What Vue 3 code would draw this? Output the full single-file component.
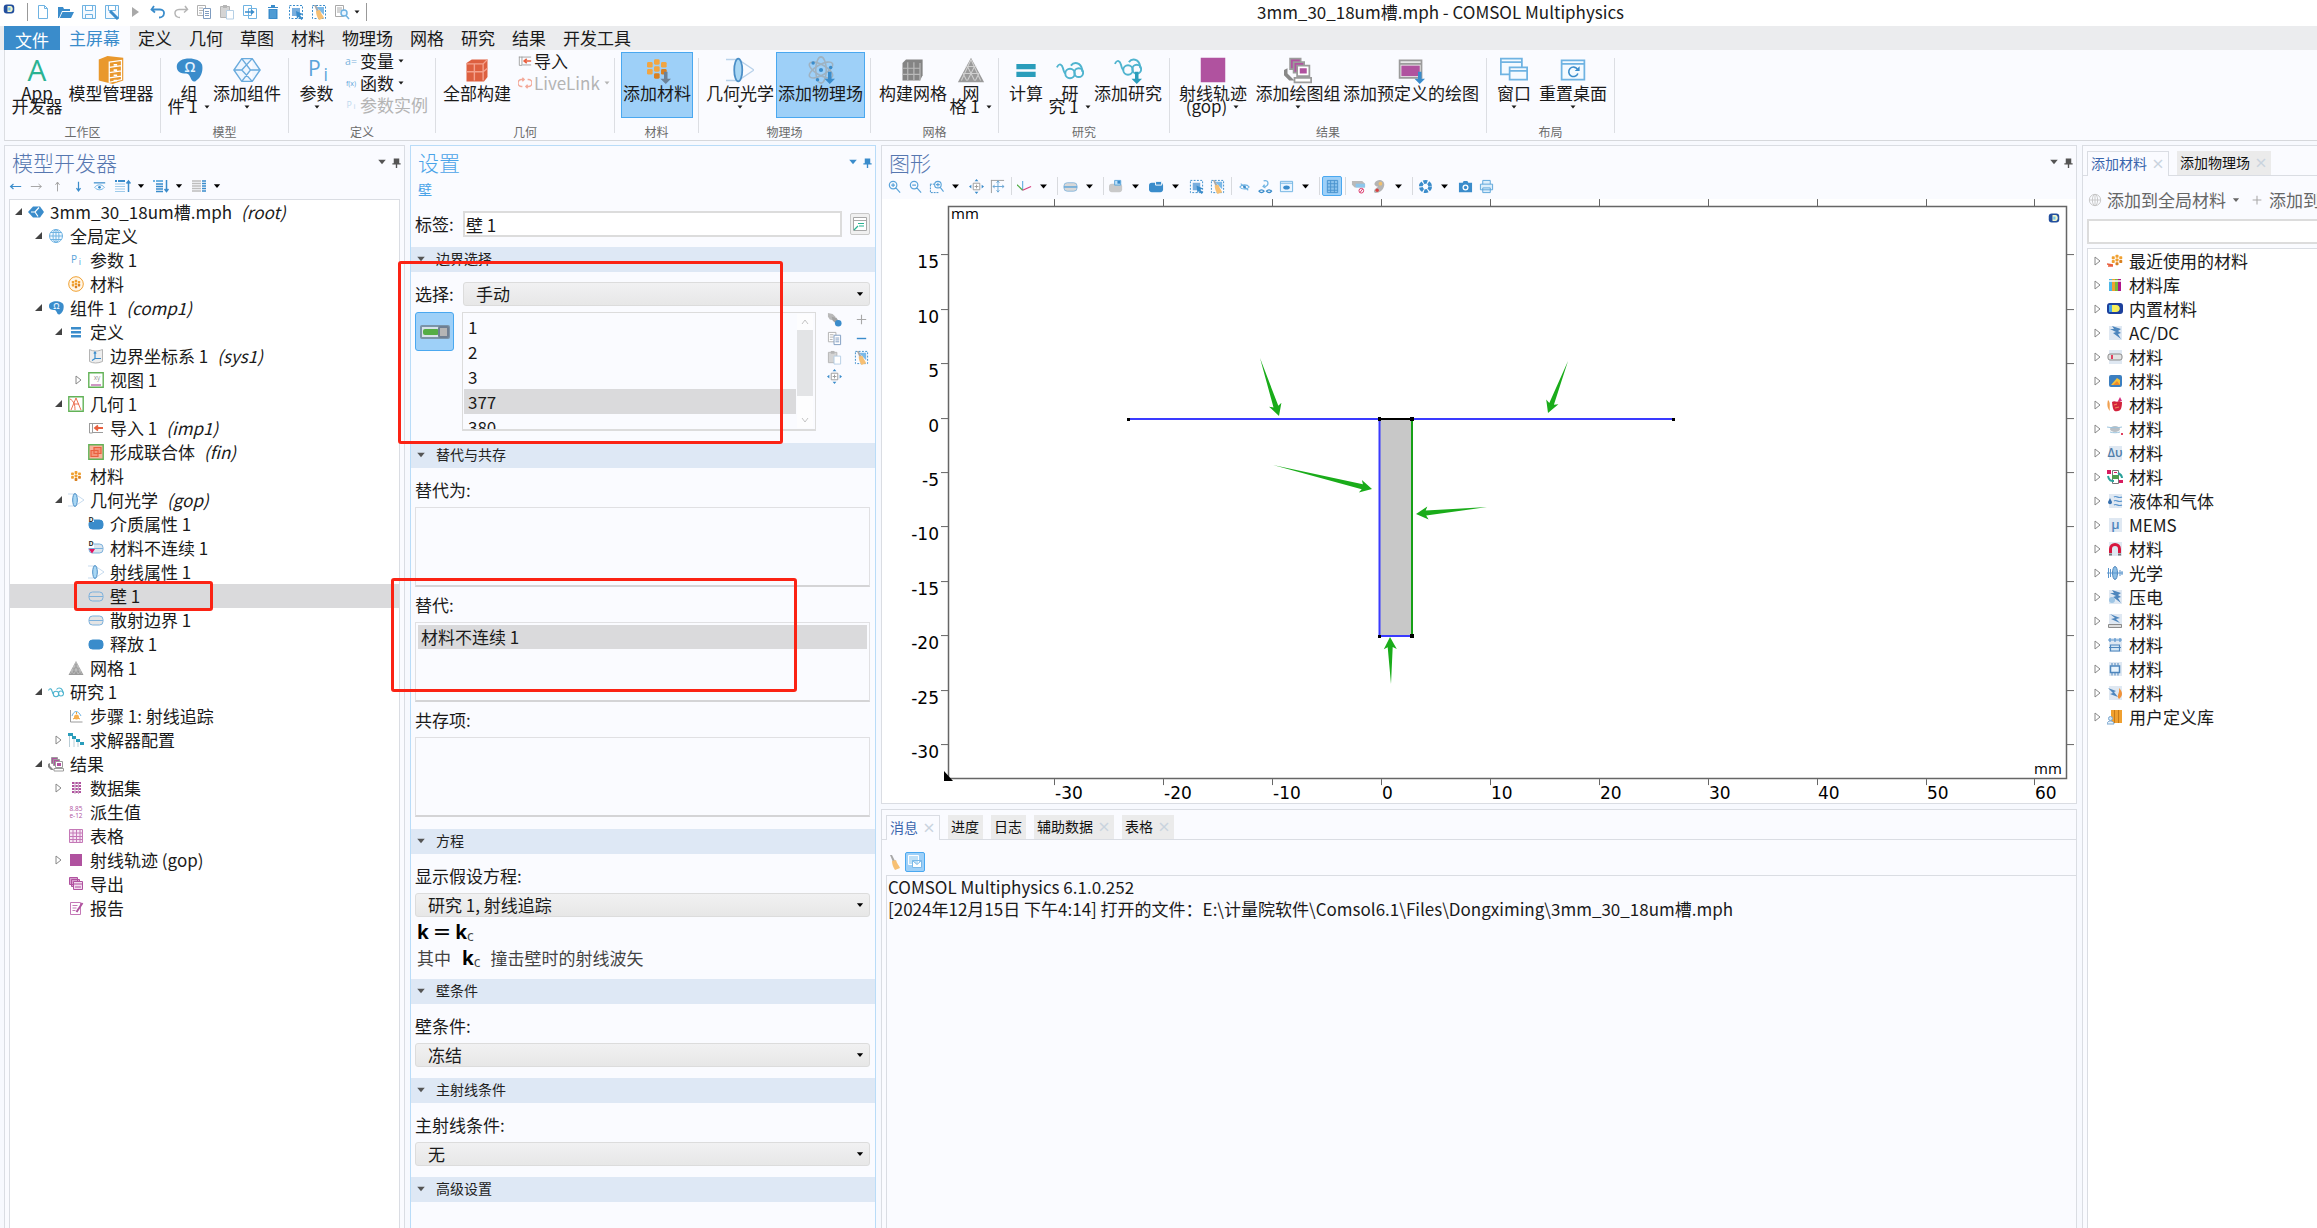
<script setup>
import { h, ref } from 'vue'

const B = '#3a8ccb'
const L = '#6fb3e2'
const G = '#9b9b9b'
const O = '#f0a030'
const R = '#e9603f'
const T = '#2a9dbb'
const P = '#b0529f'
const svgText = (x, y, s, c, t, extra = '') =>
  `<text x="${x}" y="${y}" font-size="${s}" fill="${c}" text-anchor="middle" font-family="Open Sans, sans-serif" ${extra}>${t}</text>`
const stroke = (d, c, w = 1, f = 'none') => `<path d="${d}" stroke="${c}" stroke-width="${w}" fill="${f}"/>`
const fill = (d, c) => `<path d="${d}" fill="${c}"/>`
const dots = (c, c2 = '#d98020') =>
  `<g fill="${c}"><rect x="6" y="1" width="4" height="4" rx="1"/><rect x="1" y="3" width="4" height="4" rx="1"/><rect x="11" y="3" width="4" height="4" rx="1"/><rect x="6" y="6" width="4" height="4" rx="1"/><rect x="1" y="8" width="4" height="4" rx="1"/></g><g fill="${c2}"><rect x="11" y="8" width="4" height="4" rx="1"/><rect x="6" y="11" width="4" height="4" rx="1"/></g>`
const glasses = `<g fill="none" stroke="#4fb4cf" stroke-width="1.1"><circle cx="8" cy="10" r="2.7"/><circle cx="13" cy="9.5" r="2.5"/><path d="M.5 6.5C2 3.500 3.500 5 4 7c.5 2 1 3 1.500 3M8.500 5.500C10 3.500 12 4 13 4.500c1.500 1 2 3 2 4.500"/></g>`
const meshLines = stroke('M5 6h6M3.500 10h9M8 2l5.500 12M8 2L2.500 14M6 6l4 8M10 6L6 14M3.500 10l2 4M12.500 10l-2 4', '#cfcfcf', .6)
const stack = (c) =>
  `<g stroke="${G}" fill="#fff"><path d="M3.500 1.500h6v6h-6z" fill="${c}"/><path d="M5.500 3.500h6v6h-6z" fill="${c}"/><path d="M7.500 5.500h7v6h-7z"/></g>` +
  fill('M9 7h4v3H9z', c) + fill('M0 8l2-1v3l4 4H3L0 11z', '#888') + stroke('M6 12.500h9.500v2.500h-9.500z', G, 1, '#fff')
const pill = (c, f) => `<rect x="1" y="4" width="14" height="9" rx="3.500" fill="${f}" stroke="${c}"/>`
const soft = '<rect x="2" y="1" width="13" height="14" fill="#dfe8f2"/>'
const broom = fill('M3 1l2 0 3 6-2 1z', '#a8a8a8') + fill('M5 7l4-1c1 4 3 5 4 8l-5 2C6 13 5 10 5 7z', '#f7c074')
const dashBox = stroke('M1.500 1.500h13v13h-13z', B, 1).replace('/>', ' stroke-dasharray="2 1.500"/>')
const downArrow = (c) => fill('M12 9h2v4h2l-3 3-3-3h2z', c)
const bolt = fill('M5 1l9 3-3 2 3 2-3 1 3 5-8-6 3-1-6-3 4 0z', '#4e86bd')

const icons = {
  logo: '<rect x="1" y="2" width="14" height="12" rx="4" fill="#234f9e"/><path d="M6 4h4c4 0 4 8 0 8H6z" fill="#f3f6c9"/><path d="M7 6h3v4H7z" fill="#6fc4ef"/>',
  newf: stroke('M3.500 1.500h6l3 3v10h-9zM9.500 1.500v3h3', L, 1, '#fff'),
  open: fill('M0 3h5l1 2h6v2H4l-3 7H0zM4.500 8H16l-3 6H1.800z', B),
  save: stroke('M1.500 1.500h13v13h-13z M4.500 1.500v5h7v-5 M4.500 14.500v-4h7v4', L, 1, '#f4f9ff'),
  saveas: stroke('M1.500 1.500h13v13h-13z M4.500 1.500v5h7v-5', L, 1, '#f4f9ff') + stroke('M6 7l8 8', B, 3),
  play: fill('M5 3l7 5-7 5z', '#a9a9a9'),
  undo: stroke('M4 2L1.500 5.500 5 8.500M1.500 5.500H10c6 0 5 8-1 8', B, 1.800),
  redo: stroke('M12 2l2.500 3.500L11 8.500M14.500 5.500H6c-6 0-5 8 1 8', '#b5b5b5', 1.500),
  copy: stroke('M1.500 1.500h8v10h-8zM3 4h4M3 6.500h4M3 9h3', '#b0b0b0', 1, '#fff') + stroke('M7.500 4.500h7v10h-7zM9 7.500h4M9 9.500h4M9 11.500h4', '#7f9cc0', 1, '#fff'),
  paste: stroke('M1.500 2.500h9v11h-9z', '#b5b5b5', 1, '#d4d4d4') + fill('M4 1h4v3H4z', '#b5b5b5') + stroke('M7.500 6.500h7v8.500h-7z', '#b5cfe5', 1, '#fff'),
  dup: stroke('M1.500 1.500h8v10h-8zM6.500 4.500h8v10h-8z', L, 1, '#fff') + stroke('M3 8h8M9 6l2.500 2L9 10', B, 1.500),
  trash: fill('M3 3h10v1H3zM6 1h4v2H6zM3.500 5h9v10h-9z', B) + stroke('M6 6v8M8 6v8M10 6v8', L, .8),
  selbox: dashBox + fill('M4 4h8v8H4z', '#79aede') + fill('M8 7l7 3-3 1.500 3 3-1.500 1.500-3-3L9 15z', B),
  clean: dashBox + fill('M5 3h8v8z', '#7bb9e8') + broom,
  broom,
  find: stroke('M1.500 1.500h8v11h-8zM3 4h5M3 6h5M3 8h3', '#a9a9a9', 1, '#fff') + stroke('M13 9a3 3 0 1 1-6 0a3 3 0 1 1 6 0M12 11.500l3 3.500', L, 1.500, '#eaf5ff'),
  drop: fill('M3 5h10l-5 6z', 'currentColor'),
  pin: fill('M4 2h8v8H4zM2 9h12v2H2zM7 11h2v5H7z', 'currentColor'),
  bigA: svgText(8, 14, 17, '#2bb393', 'A'),
  cabinet: fill('M1 2l5-2 9 1v13l-6 2-8-2z', '#e9982c') + stroke('M7 3.500l7-1v11l-7 1.500z M7 6.500l7-1M7 9.500l7-1M7 12.500l7-1', '#fff', .7) + stroke('M9.500 5h2M9.500 8h2M9.500 11h2M9.500 14h2', '#fff', 1),
  comp: fill('M1 6C1 0 14 0 15.500 5c.8 4-1 8-4 9.500-3 .5-2-4-5-4.500C3 10 1 9 1 6z', B) + svgText(8.500, 9, 8, '#e5f3ff', 'Ω', 'font-weight="600"'),
  addcomp: stroke('M5 1.500h6L15.500 8 11 14.500H5L.5 8zM5 1.500l5 6.500-5 6.500M11 1.500L5 8l6 6.500M.5 8H5M10 8h5.500', '#6aabdd', .8, '#eef6ff'),
  pi: svgText(6.500, 11.500, 12, '#5ba4da', 'P') + svgText(13, 14, 10, '#5ba4da', 'i'),
  pis: svgText(6, 11, 10, '#5ba4da', 'P') + svgText(12, 13, 9, '#5ba4da', 'i'),
  aeq: svgText(8, 12, 12, '#7cb3dd', 'a='),
  fx: svgText(8, 11, 8, '#5ba4da', 'f(x)'),
  pig: svgText(6, 11, 10, '#bdd8ee', 'P') + svgText(12, 13, 9, '#bdd8ee', 'i'),
  buildall: fill('M2 4l3-2h9v10l-2 2.500H2z', '#dd6040') + stroke('M2 4.500h9.500V14M11.500 4.500L14 2M2 9h9.500l2.500-2M6.500 4.500V14', '#f4a18c', .8),
  imp: stroke('M1 3.500h14M1.500 3v10h3V3M5 12.500h10', G, 1, '#fff') + stroke('M15 8H7M10 5.500L7 8l3 2.500', R, 1.800),
  livelink: stroke('M7 4H4a3 3 0 0 0 0 8h1M9 12h3a3 3 0 0 0 0-8h-1M5 2l2 2-2 2M11 10l-2 2 2 2', '#f3a999', 1.600),
  addmat: '<g transform="translate(1.500 1) scale(.8)">' + dots('#f2a541') + '</g>' + downArrow('#6d8296'),
  lens: stroke('M0 2h7L16 8 7 14H0', '#b9d2ea', .8) + '<ellipse cx="7" cy="8" rx="2.300" ry="6.500" fill="#a9d7f4" stroke="#4c8fc7"/>',
  atom: '<g fill="none" stroke="#9fb2c1" stroke-width=".9"><ellipse cx="8" cy="8" rx="3" ry="7.500"/><ellipse cx="8" cy="8" rx="3" ry="7.500" transform="rotate(60 8 8)"/><ellipse cx="8" cy="8" rx="3" ry="7.500" transform="rotate(120 8 8)"/></g><g fill="#3a8ccb"><circle cx="8" cy="8" r="1.200"/><circle cx="3.500" cy="4" r="1"/><circle cx="13.500" cy="6.500" r="1"/><circle cx="6" cy="13.500" r="1"/></g>' + downArrow(B),
  meshbuild: fill('M2 4l2-2h9.500v9L12 14H2z', '#848484') + stroke('M5 3.500V14M8.500 3.500V14M2 7h10M2 10.500h10M12 4v10', '#b9b9b9', .7),
  mesh: fill('M8 1l7.500 14H.5z', '#9a9a9a') + meshLines,
  equal: fill('M2.500 4.500h11v3h-11zM2.500 9h11v3h-11z', T),
  study: glasses,
  addstudy: `<g transform="translate(0 -2)">${glasses}</g>` + downArrow(T),
  sq: `<rect x="1" y="1" width="14" height="14" fill="${P}"/>`,
  sqs: `<rect x="2" y="2" width="12" height="12" fill="${P}"/>`,
  plots: stack(P),
  addplot: stroke('M1.500 2.500h12.500v10h-12.500zM1.500 4.500h12.500', G, 1, '#e8e8e8') + fill('M2.500 5.500h10.500v6H2.500z', P) + downArrow(B),
  windows: stroke('M.5 1.500h12v9H.5zM.5 3.500h12', L, 1, '#f4faff') + stroke('M5.500 6.500h10v7h-10zM5.500 8.500h10', L, 1, '#f4faff'),
  reset: stroke('M1.500 2.500h13v11h-13zM1.500 4.500h13', L, 1, '#f4faff') + stroke('M10.500 7.500a2.700 2.700 0 1 0 .3 2.500', B, .9) + fill('M9 8.500h2.800V5.800z', B),
  left: stroke('M15 8H2M5.500 5L2 8l3.500 3', B, 1.500),
  right: stroke('M1 8h13M10.500 5L14 8l-3.500 3', '#a5a5a5', 1.200),
  up: stroke('M8 14V2.500M5.500 6L8 2.500 10.500 6', '#a5a5a5', 1.200),
  down: stroke('M8 2v11.500M5.500 10L8 13.500l2.500-3.500', B, 1.500),
  eyebar: stroke('M1 3.500h14', B, 1.500) + stroke('M2 9c3-4 9-4 12 0-3 4-9 4-12 0z', L, 1.200) + '<circle cx="8" cy="9" r="1.700" fill="#3a8ccb"/>',
  colup: fill('M0 2h2v2H0zM3 2h7v2H3z', B) + stroke('M0 6h10M0 8.500h10M0 11h10M0 13.500h10', '#9fcbea', 1.200) + stroke('M13.500 14V3M11.500 5.500l2-2.500 2 2.500', B, 1.500),
  coldown: fill('M0 2h2v2H0zM3 2h7v2H3z', L) + stroke('M3 6h7M3 8.500h7M3 11h7M3 13.500h7', B, 1.500) + stroke('M13.500 2v11M11.500 11l2 2.500 2-2.500', B, 1.500),
  cols: stroke('M1 3h9M1 5.500h9M1 8h9M1 10.500h9M1 13h9', '#bdbdbd', 1.500) + stroke('M11 3h4M11 5.500h4M11 8h4M11 10.500h4M11 13h4', B, 1.500),
  root: fill('M0 8l5-5.500h7l4 5.500-4 5.500H5z', B) + stroke('M3 8h4l4-4.500M7 8l3 4.500', '#fff', 1.200),
  globe: '<g fill="none" stroke="#6fb3e2"><circle cx="8" cy="8" r="6.500" fill="#f0f8ff"/><ellipse cx="8" cy="8" rx="3" ry="6.500"/><path d="M1.500 8h13M2.500 4.500h11M2.500 11.500h11M8 1.500v13"/></g>',
  globeg: '<g fill="none" stroke="#c3c3c3"><circle cx="8" cy="8" r="6.500"/><ellipse cx="8" cy="8" rx="3" ry="6.500"/><path d="M1.500 8h13M8 1.500v13"/></g>',
  matglobe: '<circle cx="8" cy="8" r="7.300" fill="#fff6e8" stroke="#f0a030"/><g transform="translate(3.200 3.200) scale(.6)">' + dots(O) + '</g>',
  mat: '<g transform="translate(2.400 2.400) scale(.7)">' + dots(O) + '</g>',
  lines: fill('M3 3h10v2.500H3zM3 7h10v2.500H3zM3 11h10v2.500H3z', B),
  sys: stroke('M1.500 1.500c4 2 8 2 13 0v12c-5 2-9 2-13 0z', '#b4b4b4', 1, '#eee') + stroke('M7 4v6.500h6M7 10.500l-3 2M5.800 5.500L7 4l1.200 1.500', B, 1.200),
  view: stroke('M.8 .8h14.400v14.400H.8z', '#62b257', 1.400, '#fff') + svgText(9, 8, 6.500, '#999', 'xy') + stroke('M3 13h10', P, 1.200),
  geom: stroke('M.8 .8h14.400v14.400H.8z', '#62b257', 1.400, '#fff') + stroke('M2 3c4 2 5 6 5 11M3 14L8 2l5 12M6 8h5', R, .9),
  union: stroke('M.8 .8h14.400v14.400H.8z', '#62b257', 1.400, '#f8b39c') + stroke('M3 6.500h7v6H3zM6 3.500h7v6H6z', R, 1.200, '#f49579'),
  domD: pill(B, B) + fill('M0 0h6v6H0z', '#fff') + svgText(3, 6, 7, '#333', 'D', 'font-weight="700"'),
  disc: pill('#7db1dc', '#dce6ee') + stroke('M1 8.500h14', '#7db1dc') + fill('M0 0h6v8H0z', '#fff') + svgText(3, 6, 7, '#333', 'D', 'font-weight="700"') + fill('M1 9h6l-3 4.500z', '#e0115f'),
  wall: pill('#7db1dc', 'none') + stroke('M1 8.500h14', '#7db1dc'),
  scatter: pill('#7db1dc', '#e4e4e4') + stroke('M1 8.500h14', '#7db1dc'),
  solid: pill(B, B),
  step: stroke('M2.500 2v12h12', G) + stroke('M4 8c2-6 6-6 9 0', L) + '<circle cx="8.500" cy="9" r="2.500" fill="#f7b050"/>' + stroke('M5 11l2-1M12 11l-2-1M8.500 4v2', O, 1),
  solver: fill('M0 1h5v3H0zM4 4h4v3H4zM8 7h4v3H8zM12 10h4v3h-4z', T) + stroke('M1.500 4v11M6 7v8M10 10v5', '#b9cdd6'),
  dataset: stroke('M4 3h9M4 6h9M4 9h9M4 12h9', P, 2).replace('/>', ' stroke-dasharray="2.500 .8"/>') + stroke('M7 2v12M10.500 2v12', '#c7a7c2'),
  derived: svgText(8, 7, 6.500, P, '8.85') + svgText(8, 14, 6.500, P, 'e-12'),
  tbl: stroke('M1.500 1.500h13v13h-13zM1.500 5h13M1.500 8.500h13M1.500 11.500h13M5 1.500v13M8.500 1.500v13M12 1.500v13', '#c478b7', 1, '#f7e6f4'),
  exp: stroke('M1.500 1.500h8v7h-8zM3.500 3.500h8v7h-8z', P, 1, '#d79ccd') + stroke('M5.500 5.500h9v8h-9zM5.500 8h9M7 11h6', P, 1, '#f2dcef'),
  report: stroke('M2.500 2.500h10v12h-10zM4.500 5.500h5M4.500 8h4M4.500 10.500h3', '#c478b7', 1, '#fff') + stroke('M14.500 3l-6 9', P, 2),
  rename: stroke('M1.500 1.500h13v13h-13zM1.500 4.500h13', '#a8a8a8', 1, '#fff') + stroke('M6 7.500h6M7 10h5M2 14l4-4', '#2bb393', 1.200),
  chain: fill('M1 1l5 1 3 3-1 4-5-1L1 5z', '#b9b9b9') + fill('M5 5l5 1 2 3-3 3-3-3z', '#a3a3a3') + '<circle cx="12" cy="12" r="3.500" fill="#3a8ccb"/>',
  plus: stroke('M8 3v10M3 8h10', '#a8a8a8', 1.200),
  minus: stroke('M3 8h10', B, 1.500),
  extents: stroke('M4.500 4.500h7v7h-7zM8 6v4M6 8h4', G, 1, '#fff') + fill('M8 0l2 2.500H6zM8 16l2-2.500H6zM0 8l2.500-2v4zM16 8l-2.500-2v4z', B),
  zoomin: stroke('M10.500 6.500a4 4 0 1 1-8 0a4 4 0 1 1 8 0M9.500 9.500L14 14.500M4.500 6.500h4M6.500 4.500v4', '#5ba4da', 1.300),
  zoomout: stroke('M10.500 6.500a4 4 0 1 1-8 0a4 4 0 1 1 8 0M9.500 9.500L14 14.500M4.500 6.500h4', '#5ba4da', 1.300),
  zoombox: stroke('M1 5.500h5M1.500 6v8.500h9', B).replace('/>', ' stroke-dasharray="2 1"/>') + stroke('M13 6a3.500 3.500 0 1 1-7 0a3.500 3.500 0 1 1 7 0M12 9l3.500 4.500M7.500 6h4M9.500 4v4', '#5ba4da', 1.200),
  fit: stroke('M1 1.500h14M1.500 1v14', G) + stroke('M8.500 2v12M3 8h12M7 4l1.500-2L10 4M7 12l1.500 2 1.500-2M5 6.500L3 8l2 1.500M13 6.500L15 8l-2 1.500', '#6aa5d3', 1),
  axes: stroke('M6 12V2', L, 1.300) + stroke('M6 12L0 6', '#55b04a', 1.300) + stroke('M6 12l9-4', '#d8407f', 1.300),
  bnd: pill('#8bb9dd', '#d8d8d8') + stroke('M1 8.500h14', '#5ba4da', 1.500),
  objg: '<rect x="0" y="5" width="14" height="9" rx="3" fill="#c9c9c9"/>' + stroke('M6 1.500h6.500v5h-6.500z', '#5ba4da', 1, '#bfe0f7') + fill('M9 2h3v3H9z', B),
  objb: '<rect x="0" y="4" width="15" height="10" rx="3" fill="#3a8ccb"/>' + stroke('M7 2.500h6.500v4h-6.500z', '#fff', 1, B),
  hide: stroke('M3 8.500c2-3 8-3 10 0-2 3-8 3-10 0zM4 5l8 7', L, 1.100) + '<circle cx="8" cy="8.500" r="1.500" fill="#3a8ccb"/>',
  hidesel: stroke('M6 2c6-2 6 6 1 6M7 6L5.500 8 8 9.500', L, 1.400) + stroke('M1 13c1.500-2 4-2 5.500 0-1.500 2-4 2-5.500 0zM9 13c1.500-2 4-2 5.500 0-1.500 2-4 2-5.500 0z', B, 1.300),
  showbox: stroke('M1.500 2.500h13v11h-13zM1.500 4.500h13', L, 1, '#eaf5ff') + '<ellipse cx="8" cy="9" rx="3.500" ry="2.200" fill="#3a8ccb"/>',
  gridb: stroke('M2.500 1.500h11v13h-11zM2.500 5h11M2.500 8.500h11M2.500 12h11M6 1.500v13M10 1.500v13', '#4a93cf', 1, '#8cc3ec'),
  noclip: fill('M1 2h11l3 3v4H4L1 6z', '#b9b9b9') + fill('M5 5h10v4H5z', '#8cc6ec') + stroke('M13.500 12.500a2.500 2.500 0 1 1-5 0a2.500 2.500 0 1 1 5 0M9.500 14.500l3-4', '#dd3366', 1),
  kidney: fill('M3 4c3-5 11-3 10 3-1 5-5 8-9 8-3 0-2-4 0-5 2-1 3-2 1-2-2-1-3-2-2-4z', '#b4b4b4') + '<circle cx="9" cy="5" r="2" fill="#f0c070"/><circle cx="5.500" cy="12" r="1.800" fill="#d84040"/>',
  aperture: '<circle cx="8" cy="8" r="5" fill="none" stroke="#3a8ccb" stroke-width="4" stroke-dasharray="4 1.200"/>',
  camera: fill('M1 4h4l1-2h4l1 2h4v10H1z', B) + '<circle cx="8" cy="9" r="3.200" fill="#fff"/><circle cx="8" cy="9" r="1.800" fill="#3a8ccb"/>',
  printer: stroke('M4 5.500v-4h8v4M1.500 5.500h13v6h-13zM4 9.500h8v5h-8z', '#5ba4da', 1, '#dceefb'),
  mail: stroke('M1.500 1.500h10v9h-10z', '#fff', 1, '#bfe0f7') + stroke('M5.500 6.500h9v7h-9zM5.500 6.500l4.500 4 4.500-4', '#7bb9e8', 1, '#fff'),
  recent: '<g transform="translate(4 1) scale(.75)">' + dots(O) + '</g>' + stroke('M0 11l6 1M1 13h5', R, 1.500),
  lib: fill('M2 2h3v12H2z', '#4bb6e6') + fill('M5 2h3v12H5z', '#f0a030') + fill('M8 2h3v12H8z', '#7ab83a') + fill('M11 2h3v12h-3z', '#b0148c') + stroke('M2 4h12', '#fff', 1.500),
  builtin: '<rect x="0" y="2" width="16" height="11" rx="3" fill="#1c3f9c"/><path d="M5 4h4c5 0 5 7 0 7H5z" fill="#f6ee5a"/><path d="M2 4h3v7H2z" fill="#49a6e9"/>',
  acdc: soft + bolt,
  battery: soft + '<rect x="1" y="5" width="14" height="6" rx="2" fill="#e2e2e2" stroke="#8b8b8b"/>' + fill('M4 6h2v4H4z', '#e04060'),
  piezo: '<rect x="2" y="2" width="13" height="12" rx="2" fill="#3c7fc0"/>' + fill('M4 12l6-7 3 2v5z', '#f5c23a') + fill('M6 12l4-4 3 4z', '#ee8a2a'),
  bio: fill('M1 3c3 2 1 8 2 11-3-3-3-7-2-11z', '#f0a050') + fill('M5 5c3-2 4 1 7-1l3 1c0 5-1 9-4 9-4 1-5 0-6-9z', '#d2233c') + fill('M13 0l2 4h-4z', '#d42a7b') + stroke('M7 8l3-1M8 11l4-1', '#f08a5a', 1.200),
  heat: '<ellipse cx="8" cy="8" rx="5" ry="3" fill="#b9bfc5"/>' + stroke('M0 6c5 1 11 1 15 0M3 11c3 1 7 1 10 0', '#9cc4de') + fill('M14 12h2v2h-2z', '#e04060'),
  delta: soft + svgText(8, 12, 12, '#4e7ca8', 'Δυ', 'font-weight="600"'),
  fuel: stroke('M5.500 1.500h6v13h-6z', '#777', 1, '#fff') + fill('M5 6h7v4H5z', '#4f9e50') + fill('M0 1h4v4H0zM12 11h4v3h-4z', '#d81b60') + stroke('M1 7c1 5 3 5 6 5M15 9c0-3-2-4-4-5', '#2aa19a', 2) + fill('M7 3h3v1H7z', '#d81b60'),
  liquid: soft + fill('M3 5l2 4c0 3-4 3-4 0z', '#356fae') + stroke('M7 4c2-2 4 2 8 0M7 8c2-2 4 2 8 0M7 12c2-2 4 2 8 0', '#5a95cd', 1.200),
  mems: soft + svgText(8.500, 12, 13, '#4e86bd', 'μ', 'font-weight="600"'),
  magnet: soft + stroke('M3.500 12V8c0-6 9-6 9 0v4', '#d8173f', 3) + stroke('M2 13.500h3M11 13.500h3', '#777', 2),
  optics: '<g fill="#8dbfe6" stroke="#4e86bd"><ellipse cx="8" cy="8" rx="2.500" ry="6.500"/></g>' + stroke('M1.500 3v10M3.500 4v8M13 5v6M15 6v4M0 8h16', '#5a95cd'),
  piezoel: soft + bolt + '<circle cx="5" cy="11" r="3" fill="#9ec5e4"/>',
  semi: soft + fill('M3 1l10 4-4 1 4 4-9-4 4-1z', '#4e86bd') + stroke('M1.500 11.500h13v3h-13z', '#8b8b8b', 1, '#ddd'),
  therm: soft + stroke('M1 3h14M3 1v4M8 1v4M13 1v4', '#5a95cd', 1.200) + stroke('M3.500 8h9v6h-9zM2 10.500h12', '#4e86bd', 1.200, '#d3e6f5'),
  chip: soft + stroke('M3.500 5h9v6.500h-9z', '#4e86bd', 1.500, '#e8f3fc') + stroke('M5 2v2.500M8 2v2.500M11 2v2.500M5 12v2.500M8 12v2.500M11 12v2.500', '#4e86bd'),
  therbolt: soft + fill('M1 3l8 3-2 1 4 5-8-3 3-1z', '#4e86bd') + fill('M12 3c4 4 4 8 0 11-3-3 1-6 0-11z', '#f0923a'),
  user: fill('M4 1h3v13H4zM8 1h3v13H8zM12 1h3v13h-3z', '#f0a030') + stroke('M7.500 1v13M11.500 1v13', '#c77a18') + stroke('M0 15c0-4 7-4 7 0z', '#7aa6cf', 1, '#e8f3fc') + '<circle cx="3.500" cy="9.500" r="2" fill="#cfe4f5" stroke="#7aa6cf"/>',
}

const Ic = (p) => h('svg', { viewBox: '0 0 16 16', width: p.s || 16, height: p.s || 16, innerHTML: icons[p.n], 'aria-hidden': 'true', class: 'ic' })
Ic.props = ['n', 's']

const quick = ['newf', 'open', 'save', 'saveas', 'play', 'undo', 'redo', 'copy', 'paste', 'dup', 'trash', 'selbox', 'clean', 'find']
const menus = ['定义', '几何', '草图', '材料', '物理场', '网格', '研究', '结果', '开发工具']

const groups = [
  { name: '工作区', w: 155, items: [{ i: 'bigA', w: 64, t: ['App', '开发器'] }, { i: 'cabinet', w: 84, t: ['模型管理器'] }] },
  { name: '模型', w: 127, items: [{ i: 'comp', w: 56, t: ['组', '件 1'], d: 1 }, { i: 'addcomp', w: 60, t: ['添加组件', ''], d: 1 }] },
  {
    name: '定义', w: 146, items: [{ i: 'pi', w: 55, t: ['参数', ''], d: 1 }],
    small: [{ i: 'aeq', t: '变量', d: 1 }, { i: 'fx', t: '函数', d: 1 }, { i: 'pig', t: '参数实例', off: 1 }],
  },
  { name: '几何', w: 178, items: [{ i: 'buildall', w: 82, t: ['全部构建'] }], small: [{ i: 'imp', t: '导入' }, { i: 'livelink', t: 'LiveLink', d: 1, off: 1 }] },
  { name: '材料', w: 83, lead: 6, items: [{ i: 'addmat', w: 72, t: ['添加材料'], on: 1 }] },
  { name: '物理场', w: 171, lead: 5, items: [{ i: 'lens', w: 72, t: ['几何光学', ''], d: 1 }, { i: 'atom', w: 89, t: ['添加物理场'], on: 1 }] },
  { name: '网格', w: 127, items: [{ i: 'meshbuild', w: 84, t: ['构建网格'] }, { i: 'mesh', w: 32, t: ['网', '格 1'], d: 1 }] },
  { name: '研究', w: 170, items: [{ i: 'equal', w: 54, t: ['计算'] }, { i: 'study', w: 34, t: ['研', '究 1'], d: 1 }, { i: 'addstudy', w: 82, t: ['添加研究'] }] },
  { name: '结果', w: 316, items: [{ i: 'sq', w: 86, t: ['射线轨迹', '(gop)'], d: 1 }, { i: 'plots', w: 84, t: ['添加绘图组', ''], d: 1 }, { i: 'addplot', w: 142, t: ['添加预定义的绘图'] }] },
  { name: '布局', w: 127, items: [{ i: 'windows', w: 54, t: ['窗口', ''], d: 1 }, { i: 'reset', w: 64, t: ['重置桌面', ''], d: 1 }] },
]

const modelTools = ['left', 'right', 'up', 'down', 'eyebar']
const tree = [
  [0, 'o', 'root', '3mm_30_18um槽.mph', '(root)'],
  [1, 'o', 'globe', '全局定义'],
  [2, '', 'pis', '参数 1'],
  [2, '', 'matglobe', '材料'],
  [1, 'o', 'comp', '组件 1', '(comp1)'],
  [2, 'o', 'lines', '定义'],
  [3, '', 'sys', '边界坐标系 1', '(sys1)'],
  [3, 'c', 'view', '视图 1'],
  [2, 'o', 'geom', '几何 1'],
  [3, '', 'imp', '导入 1', '(imp1)'],
  [3, '', 'union', '形成联合体', '(fin)'],
  [2, '', 'mat', '材料'],
  [2, 'o', 'lens', '几何光学', '(gop)'],
  [3, '', 'domD', '介质属性 1'],
  [3, '', 'disc', '材料不连续 1'],
  [3, '', 'lens', '射线属性 1'],
  [3, '', 'wall', '壁 1', '', true],
  [3, '', 'scatter', '散射边界 1'],
  [3, '', 'solid', '释放 1'],
  [2, '', 'mesh', '网格 1'],
  [1, 'o', 'study', '研究 1'],
  [2, '', 'step', '步骤 1: 射线追踪'],
  [2, 'c', 'solver', '求解器配置'],
  [1, 'o', 'plots', '结果'],
  [2, 'c', 'dataset', '数据集'],
  [2, '', 'derived', '派生值'],
  [2, '', 'tbl', '表格'],
  [2, 'c', 'sqs', '射线轨迹 (gop)'],
  [2, '', 'exp', '导出'],
  [2, '', 'report', '报告'],
]
const materials = [
  ['recent', '最近使用的材料'], ['lib', '材料库'], ['builtin', '内置材料'], ['acdc', 'AC/DC'], ['battery', '材料'], ['piezo', '材料'],
  ['bio', '材料'], ['heat', '材料'], ['delta', '材料'], ['fuel', '材料'], ['liquid', '液体和气体'], ['mems', 'MEMS'], ['magnet', '材料'],
  ['optics', '光学'], ['piezoel', '压电'], ['semi', '材料'], ['therm', '材料'], ['chip', '材料'], ['therbolt', '材料'], ['user', '用户定义库'],
]
const name = ref('壁 1')
const boundaries = ['1', '2', '3', '377', '380']
const listTools = ['chain', 'plus', 'copy', 'minus', 'paste', 'clean', 'extents']

// "v" opens a drop-down marker, "|" a separator
const plotTools = ['zoomin', 'zoomout', 'zoombox', 'v', 'extents', 'fit', '|', 'axes', 'v', '|', 'bnd', 'v', '|', 'objg', 'v', 'objb', 'v', 'selbox', 'clean', '|', 'hide', 'hidesel', 'showbox', 'v', '|', 'gridb', '|', 'noclip', 'kidney', 'v', '|', 'aperture', 'v', 'camera', 'printer']

// plot geometry, in the drawing's own units
const xTicks = [-30, -20, -10, 0, 10, 20, 30, 40, 50, 60].map((v) => ({ v, x: Math.round(500 + v * 10.89) }))
const yTicks = [15, 10, 5, 0, -5, -10, -15, -20, -25, -30].map((v) => ({ v, y: Math.round(219.5 - v * 10.88) }))
const arrow = (x1, y1, x2, y2) => {
  const len = Math.hypot(x2 - x1, y2 - y1)
  const ux = (x2 - x1) / len
  const uy = (y2 - y1) / len
  const at = (back, side) => `${(x2 - ux * back - uy * side).toFixed(1)},${(y2 - uy * back + ux * side).toFixed(1)}`
  return [at(0, 0), at(12, 6.5), at(10, 2.5), at(len, 0), at(10, -2.5), at(12, -6.5)].join(' ')
}
const arrows = [
  arrow(378, 159, 397, 217), arrow(686, 162, 666, 214), arrow(391, 266, 490, 290), arrow(605, 308, 534, 315), arrow(509, 485, 508, 438),
]
const tabs = [['消息', 1], ['进度', 0], ['日志', 0], ['辅助数据', 1], ['表格', 1]]
</script>

<template>
  <div class="app">
    <header class="title">
      <Ic n="logo" :s="12" class="applogo" />
      <i class="bar" />
      <button v-for="q in quick" :key="q" class="qb"><Ic :n="q" /></button>
      <Ic n="drop" :s="8" />
      <i class="bar end" />
      <h1>3mm_30_18um槽.mph - COMSOL Multiphysics</h1>
    </header>

    <nav class="menu">
      <button class="file">文件</button>
      <button class="cur">主屏幕</button>
      <button v-for="m in menus" :key="m">{{ m }}</button>
    </nav>

    <section class="ribbon">
      <template v-for="g in groups" :key="g.name">
        <div class="group" :style="{ width: g.w + 'px' }">
          <div class="tiles" :style="{ paddingLeft: (g.lead || 0) + 'px' }">
            <button v-for="b in g.items" :key="b.i" class="tile" :class="{ on: b.on }" :style="{ width: b.w + 'px' }">
              <Ic :n="b.i" :s="28" />
              <span v-for="(t, k) in b.t" :key="k" class="cap">
                {{ t }}<Ic v-if="b.d && k === b.t.length - 1" n="drop" :s="8" class="cd" :class="{ alone: !t }" />
              </span>
            </button>
            <div v-if="g.small" class="smalls">
              <button v-for="s in g.small" :key="s.t" class="small" :class="{ off: s.off }">
                <Ic :n="s.i" :s="14" />{{ s.t }}<Ic v-if="s.d" n="drop" :s="8" class="sd" />
              </button>
            </div>
          </div>
          <span class="gname">{{ g.name }}</span>
        </div>
        <i class="gsep" />
      </template>
    </section>

    <main class="work">
      <section class="panel model">
        <div class="head"><h2>模型开发器</h2><Ic n="drop" :s="12" /><Ic n="pin" :s="11" /></div>
        <div class="tools">
          <button v-for="m in modelTools" :key="m" class="mt"><Ic :n="m" :s="13" /></button>
          <button class="mt2"><Ic n="colup" /></button><Ic n="drop" :s="10" class="k" />
          <button class="mt2"><Ic n="coldown" /></button><Ic n="drop" :s="10" class="k" />
          <button class="mt2"><Ic n="cols" /></button><Ic n="drop" :s="10" class="k" />
        </div>
        <ul class="tree">
          <li v-for="(r, k) in tree" :key="k" :class="{ sel: r[5] }" :style="{ paddingLeft: 2 + r[0] * 20 + 'px' }">
            <span class="tw"><svg v-if="r[1] === 'o'" width="8" height="8"><path d="M8 0v7H1z" fill="#444" /></svg><svg v-if="r[1] === 'c'" width="7" height="10"><path d="M1 1l5 4-5 4z" fill="#fff" stroke="#888" /></svg></span>
            <Ic :n="r[2]" />
            <span class="tx">{{ r[3] }}</span><em v-if="r[4]">{{ r[4] }}</em>
          </li>
        </ul>
      </section>

      <section class="panel settings">
        <div class="head"><h2>设置</h2><Ic n="drop" :s="12" /><Ic n="pin" :s="11" /></div>
        <p class="sub">壁</p>
        <div class="row name">
          <label for="lbl">标签:</label><input id="lbl" v-model="name" type="text">
          <button class="ren"><Ic n="rename" /></button>
        </div>

        <h3><Ic n="drop" :s="12" />边界选择</h3>
        <div class="row pick">
          <label for="sel">选择:</label>
          <div class="combo"><select id="sel"><option>手动</option></select><Ic n="drop" :s="10" /></div>
        </div>
        <div class="row lists">
          <button class="toggle" aria-label="激活选择">
            <svg width="30" height="14"><rect x="1" y="1" width="28" height="12" rx="1" fill="#d8e2ea" stroke="#7b94a8" stroke-width="2" /><rect x="3" y="4" width="16" height="6" rx="2" fill="#55ad45" /><rect x="19" y="2" width="9" height="10" rx="1" fill="#b5b5b5" stroke="#6f7f92" stroke-width="2" /></svg>
          </button>
          <div class="blist">
            <ul><li v-for="b in boundaries" :key="b" :class="{ sel: b === '377' }">{{ b }}</li></ul>
            <div class="scroll">
              <svg width="16" height="16"><path d="M5 10l3-4 3 4" fill="none" stroke="#c4c4c4" /></svg>
              <i />
              <svg width="16" height="16"><path d="M5 6l3 4 3-4" fill="none" stroke="#c4c4c4" /></svg>
            </div>
          </div>
          <div class="ltools"><button v-for="t in listTools" :key="t"><Ic :n="t" :s="15" /></button></div>
        </div>

        <h3 class="after-list"><Ic n="drop" :s="12" />替代与共存</h3>
        <p class="lab first">替代为:</p>
        <div class="box" />
        <p class="lab">替代:</p>
        <div class="box"><span>材料不连续 1</span></div>
        <p class="lab">共存项:</p>
        <div class="box" />

        <h3 class="after-list"><Ic n="drop" :s="12" />方程</h3>
        <label class="lab first" for="eq">显示假设方程:</label>
        <div class="combo wide"><select id="eq"><option>研究 1, 射线追踪</option></select><Ic n="drop" :s="10" /></div>
        <p class="eq"><b>k</b><span class="op">=</span><b>k</b><sub>c</sub></p>
        <p class="eq note"><span>其中</span><b>k</b><sub>c</sub><span class="desc">撞击壁时的射线波矢</span></p>

        <h3><Ic n="drop" :s="12" />壁条件</h3>
        <label class="lab first" for="wc">壁条件:</label>
        <div class="combo wide"><select id="wc"><option>冻结</option></select><Ic n="drop" :s="10" /></div>

        <h3><Ic n="drop" :s="12" />主射线条件</h3>
        <label class="lab first" for="pc">主射线条件:</label>
        <div class="combo wide"><select id="pc"><option>无</option></select><Ic n="drop" :s="10" /></div>

        <h3><Ic n="drop" :s="12" />高级设置</h3>
      </section>

      <div class="center">
        <section class="panel graphics">
          <div class="head"><h2>图形</h2><Ic n="drop" :s="12" /><Ic n="pin" :s="11" /></div>
          <div class="tools ptools">
            <template v-for="(t, k) in plotTools" :key="k">
              <i v-if="t === '|'" class="tsep" />
              <Ic v-else-if="t === 'v'" n="drop" :s="11" class="k" />
              <button v-else :class="{ on: t === 'gridb' }"><Ic :n="t" :s="15" /></button>
            </template>
          </div>
          <svg class="plot" viewBox="0 0 1194 604">
            <g stroke="#666" fill="none">
              <path d="M66.500 7.500H1184.500V579.500H66.500z" stroke-width="1.500" />
              <path v-for="t in xTicks" :key="'x' + t.v" :d="`M${t.x - .5} 0v7M${t.x - .5} 580v6`" />
              <path v-for="t in yTicks" :key="'y' + t.v" :d="`M59 ${t.y - .5}h7M1185 ${t.y - .5}h7`" />
            </g>
            <path d="M62 572v10h9z" />
            <g class="num">
              <text v-for="t in xTicks" :key="t.v" :x="t.x" y="600">{{ t.v }}</text>
              <text v-for="t in yTicks" :key="t.v" x="57" :y="t.y + 13" text-anchor="end">{{ t.v }}</text>
            </g>
            <g class="unit"><text x="69" y="20">mm</text><text x="1152" y="575">mm</text></g>
            <g transform="translate(1166 13) scale(.75)"><rect x="1" y="2" width="14" height="12" rx="4" fill="#234f9e" /><path d="M6 4h4c4 0 4 8 0 8H6z" fill="#f3f6c9" /><path d="M7 6h3v4H7z" fill="#6fc4ef" /></g>
            <path d="M497 220h33v217h-33z" fill="#c8c8c8" />
            <g stroke="#3a3aff" stroke-width="2"><path d="M246 220h251M530 220h261M497.500 220v217M497 437h33" /></g>
            <path d="M497 220h33" stroke="#000" stroke-width="2" />
            <path d="M530 220v217" stroke="#16a016" stroke-width="2" />
            <path d="M245 219h3v3h-3zM790 219h3v3h-3zM496 218h3v4h-3zM528 218h4v4h-4zM496 436h3v3h-3zM528 435h4v4h-4z" />
            <polygon v-for="a in arrows" :key="a" :points="a" fill="#1aac1a" />
          </svg>
        </section>

        <section class="panel messages">
          <div class="tabs">
            <button v-for="(t, k) in tabs" :key="t[0]" :class="{ cur: k === 0 }">{{ t[0] }}<i v-if="t[1]" class="x">×</i></button>
          </div>
          <div class="mtools"><button><Ic n="broom" /></button><button class="on"><Ic n="mail" /></button></div>
          <div class="log">
            <p>COMSOL Multiphysics 6.1.0.252</p>
            <p>[2024年12月15日 下午4:14] 打开的文件：E:\计量院软件\Comsol6.1\Files\Dongximing\3mm_30_18um槽.mph</p>
          </div>
        </section>
      </div>

      <section class="panel mats">
        <div class="tabs">
          <button class="cur">添加材料<i class="x">×</i></button>
          <button>添加物理场<i class="x">×</i></button>
        </div>
        <div class="addbar">
          <button><Ic n="globeg" :s="14" />添加到全局材料<Ic n="drop" :s="10" class="k2" /></button>
          <button class="second"><Ic n="plus" :s="14" />添加到</button>
        </div>
        <input class="search" type="text" aria-label="搜索">
        <ul class="tree">
          <li v-for="(m, k) in materials" :key="k">
            <span class="tw"><svg width="7" height="10"><path d="M1 1l5 4-5 4z" fill="#fff" stroke="#888" /></svg></span>
            <Ic :n="m[0]" /><span class="tx">{{ m[1] }}</span>
          </li>
        </ul>
      </section>
    </main>

    <i class="mark m1" /><i class="mark m2" /><i class="mark m3" />
  </div>
</template>

<style>
body { margin: 0; background: #f7f9fe; }
</style>

<style scoped>
.app { position: relative; display: flex; flex-direction: column; height: 100vh; overflow: hidden; background: #f7f9fe; color: #1a1a1a; font: 17px/24px "Noto Sans CJK SC", sans-serif; }
.app *, .app *::before { box-sizing: border-box; }
h1, h2, h3, p, ul { margin: 0; padding: 0; font-weight: 400; list-style: none; }
button { display: flex; align-items: center; justify-content: center; flex: none; margin: 0; padding: 0; border: 0; background: none; color: inherit; font: inherit; white-space: nowrap; }
input, select { font: inherit; color: inherit; margin: 0; }
.ic { display: block; flex: none; }

.title { position: relative; display: flex; align-items: center; flex: none; height: 26px; padding-bottom: 2px; background: #fff; }
.applogo { margin: 0 12px 6px 3px; }
.bar { width: 1px; height: 18px; margin-right: 3px; background: #999; }
.bar.end { margin-left: 5px; }
.qb { width: 23px; height: 20px; }
.title h1 { position: absolute; left: 564px; right: 0; text-align: center; font-size: 17px; line-height: 22px; }

.menu { display: flex; flex: none; height: 24px; padding-left: 4px; background: #ebecee; }
.menu button { padding: 0 9px 0 8px; line-height: 24px; }
.menu .file { width: 56px; padding: 4px 0 0; background: #3a8ccb; color: #fff; overflow: hidden; }
.menu .cur { width: 70px; background: #fafbff; color: #3a8ccb; }

.ribbon { display: flex; flex: none; height: 91px; margin-left: 4px; border-left: 1px solid #dcdee2; border-bottom: 1px solid #d6d8dc; background: #fafbff; }
.group { display: flex; flex-direction: column; flex: none; }
.tiles { display: flex; height: 75px; }
.gname { height: 14px; color: #6b6b6b; font-size: 12px; line-height: 14px; text-align: center; }
.gsep { flex: none; width: 1px; height: 75px; margin-top: 8px; background: #dcdee3; }
.tile { flex-direction: column; justify-content: flex-start; height: 66px; margin-top: 2px; padding-top: 4px; }
.tile .ic { margin-bottom: 2px; }
.tile.on { padding-top: 3px; border: 1px solid #4aa8f0; background: #9ed0f8; }
.cap { display: flex; align-items: center; justify-content: center; height: 13px; line-height: 13px; white-space: pre; }
.tile .cd { margin: 3px 0 0 5px; }
.tile .cd.alone { margin-left: 0; }
.smalls { display: flex; flex-direction: column; }
.small { justify-content: flex-start; height: 22px; line-height: 22px; gap: 2px; }
.small .sd { margin-left: 1px; }
.small.off { color: #b4b4b4; }

.work { display: grid; grid-template-columns: 401px 466px minmax(0, 1fr) 235px; gap: 5px; flex: 1; min-height: 0; padding: 4px 0 0 4px; }
.panel { display: flex; flex-direction: column; min-width: 0; min-height: 0; border: 1px solid #dadde3; border-bottom: 0; background: #fafbff; overflow: hidden; }
.head { display: flex; align-items: center; flex: none; gap: 3px; height: 32px; padding: 0 2px 0 7px; color: #555; }
.head h2 { flex: 1; color: #5677b0; font-size: 21px; font-weight: 300; line-height: 28px; }
.tools { display: flex; align-items: center; flex: none; height: 16px; }
.k { color: #000; }

.model .tools { margin-bottom: 5px; }
.mt { width: 21px; }
.mt2 { width: 26px; }
.model .tools .k { margin-right: 2px; }
.tree { flex: 1; min-height: 0; margin: 0 4px; border: 1px solid #dadde3; border-bottom: 0; background: #fff; overflow: hidden; }
.tree li { display: flex; align-items: center; height: 24px; white-space: nowrap; }
.tree .sel, .blist .sel { background: #dadadc; }
.tw { display: flex; justify-content: center; width: 12px; margin-right: 4px; }
.tx { margin-left: 6px; }
.tree em { margin-left: 9px; }

.settings { border-color: #b9dcf8; }
.settings .head { color: #3a8ccb; }
.settings .head h2 { color: #4aa3e8; }
.sub { margin: 3px 0 0 7px; color: #4aa3e8; font-size: 14px; line-height: 16px; }
.row { display: flex; align-items: center; flex: none; padding: 0 5px 0 4px; }
.row label { flex: none; width: 48px; }
.name { margin-top: 14px; height: 26px; }
.name input { flex: 1; min-width: 0; height: 26px; padding: 0 1px; border: 2px solid #dcdcdc; background: #fff; }
.ren { width: 20px; height: 22px; margin-left: 8px; border: 1px solid #c9c9c9; border-radius: 2px; background: #f0f0f0; }
h3 { display: flex; align-items: center; flex: none; gap: 9px; height: 25px; margin-top: 10px; padding: 0 0 2px 4px; background: #dee8f5; font-size: 14px; line-height: 23px; color: #222; }
h3 .ic { color: #555; }
.after-list { margin-top: 12px; }
.pick { margin-top: 10px; height: 24px; }
.combo { position: relative; flex: 1; height: 24px; }
.combo.wide { flex: none; margin: 5px 5px 0 4px; }
.combo select { display: block; width: 100%; height: 24px; padding: 0 12px; border: 1px solid #dcdcdc; border-radius: 3px; background: linear-gradient(#f1f1f2, #e7e7e7); appearance: none; line-height: 22px; }
.combo .ic { position: absolute; right: 5px; top: 7px; color: #000; pointer-events: none; }
.combo.wide + h3 { margin-top: 11px; }
.lists { align-items: flex-start; height: 119px; margin-top: 6px; padding-right: 0; }
.toggle { width: 39px; height: 39px; margin-right: 8px; border: 1px solid #4aa8f0; border-radius: 3px; background: #9ed0f8; }
.blist { display: flex; flex: 1; height: 119px; padding: 1px; border: 1px solid #dcdcdc; border-bottom-width: 2px; overflow: hidden; }
.blist ul { flex: 1; }
.blist li { height: 25px; padding-left: 4px; line-height: 25px; }
.scroll { display: flex; flex-direction: column; width: 16px; margin: 0 1px; background: #fdfdfe; }
.scroll i { height: 66px; margin-bottom: auto; background: #e3e4e6; }
.ltools { display: grid; grid-template-columns: 27px 27px; width: 59px; padding-left: 5px; }
.ltools button { height: 19px; align-items: flex-start; }
.lab { display: block; flex: none; height: 24px; margin: 6px 0 0 4px; }
.lab.first { margin-top: 10px; }
.box { flex: none; height: 80px; margin: 5px 5px 0 4px; padding: 2px; border: 1px solid #e0e0e3; border-bottom: 2px solid #d4d4d6; }
.box span { display: block; height: 24px; padding-left: 3px; background: #dadadc; }
.eq { display: flex; align-items: center; flex: none; height: 22px; margin: 4px 0 0 6px; }
.eq b { color: #000; font: 700 19px/22px "Open Sans", sans-serif; }
.eq sub { padding-top: 8px; color: #444; font: 14px/14px "Open Sans", sans-serif; }
.op { margin: 0 4px; color: #000; font: 22px/22px "DejaVu Sans", sans-serif; }
.note { color: #444; font-size: 17px; }
.note span:first-child { margin-right: 11px; }
.desc { margin-left: 10px; }

.center { display: flex; flex-direction: column; gap: 5px; min-width: 0; min-height: 0; }
.graphics { flex: 659 0 0; border-bottom: 1px solid #dadde3; }
.messages { flex: 419 0 0; }
.ptools { margin-bottom: 5px; padding-left: 2px; }
.ptools button { width: 21px; height: 18px; }
.ptools .k { margin: 0 5px 0 3px; }
.tsep { flex: none; width: 1px; height: 18px; margin: 0 2px 0 3px; background: #d8dade; }
.ptools .on, .mtools .on { width: 20px; height: 20px; border: 1px solid #4aa8f0; border-radius: 2px; background: #9ed0f8; }
.plot { display: block; flex: 1; width: 100%; min-height: 0; background: #fff; }
.num { font: 17px "DejaVu Sans", sans-serif; }
.unit { font: 15px "Open Sans", sans-serif; }

.tabs { display: flex; align-items: stretch; flex: none; gap: 8px; height: 30px; padding: 5px 0 0 4px; border-bottom: 1px solid #dadde3; }
.tabs button { padding: 0 4px 1px 3px; background: #ebebeb; color: #111; font-size: 14px; line-height: 23px; }
.tabs .cur { margin-bottom: -1px; border: 1px solid #dadde3; border-bottom: 0; background: #fafbff; color: #3a66ad; }
.x { width: 12px; margin-left: 5px; color: #c9d3de; font: 20px/20px "Open Sans", sans-serif; }
.mtools { display: flex; align-items: center; flex: none; gap: 2px; height: 34px; padding: 10px 0 0 5px; }
.log { flex: 1; margin: 1px 0 0 4px; padding: 0 1px; border: 1px solid #dadde3; border-width: 1px 0 0 1px; }
.log p { line-height: 22px; white-space: nowrap; }

.mats { border-right: 0; }
.addbar { display: flex; align-items: center; flex: none; height: 24px; margin-top: 12px; padding-left: 5px; color: #666; }
.addbar button { gap: 5px; }
.addbar .second { margin-left: 9px; }
.search { flex: none; height: 25px; margin: 7px 0 0 4px; border: 2px solid #dcdcdc; border-right: 0; background: #fff; }
.mats .tree { margin: 4px 0 0 4px; border-right: 0; }
.mats .tree li { padding-left: 3px; }

.mark { position: absolute; border: 3px solid #fb2314; border-radius: 3px; pointer-events: none; }
.m1 { left: 398px; top: 261px; width: 385px; height: 183px; }
.m2 { left: 391px; top: 578px; width: 406px; height: 114px; }
.m3 { left: 74px; top: 581px; width: 139px; height: 30px; }
</style>
